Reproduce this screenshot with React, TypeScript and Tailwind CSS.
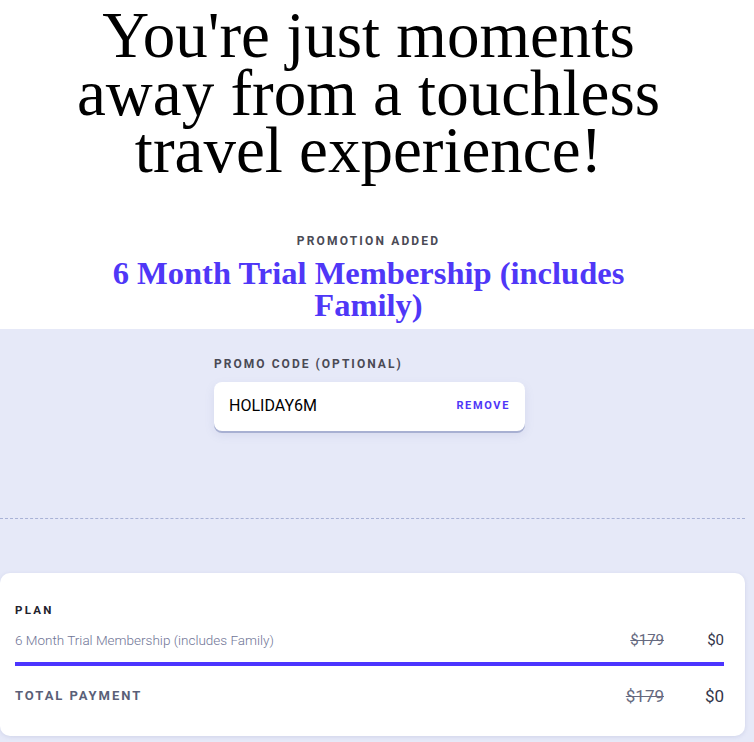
import React from "react";

export default function App() {
  const sans = { fontFamily: "Roboto, 'Liberation Sans', sans-serif" };
  const serif = { fontFamily: "'Liberation Serif', 'DejaVu Serif', serif" };
  return (
    <div className="w-[754px] h-[742px] overflow-hidden bg-white flex flex-col" style={sans}>
      <div className="flex flex-col items-center pt-[7px] pr-[17px]">
        <h1
          className="text-center text-[65px] leading-[57.5px] text-black w-[640px] font-normal"
          style={serif}
        >
          You're just moments away from a touchless travel experience!
        </h1>
        <div className="mt-[54px] text-[12px] font-bold tracking-[0.18em] text-[#4a4a55] leading-[14px]">
          PROMOTION ADDED
        </div>
        <div
          className="mt-[9px] text-center text-[32.5px] leading-[32px] font-bold text-[#4f37f7] w-[600px]"
          style={serif}
        >
          6 Month Trial Membership (includes Family)
        </div>
      </div>
      <div className="mt-[8px] flex-1 bg-[#e6e9f8] flex flex-col">
        <div className="pl-[214px] pt-[28px]">
          <div className="text-[12px] font-bold tracking-[0.17em] text-[#4a4a55] leading-[14px]">
            PROMO CODE (OPTIONAL)
          </div>
          <div className="mt-[11px] w-[311px] h-[49px] bg-white rounded-lg shadow-[0_2px_0_#a8b0d2,0_4px_10px_rgba(120,130,180,0.15)] flex items-center justify-between pl-[15px] pr-[15px]">
            <span className="text-[16px] text-black">HOLIDAY6M</span>
            <span className="text-[11px] font-bold tracking-[0.15em] text-[#4f37f7]">REMOVE</span>
          </div>
        </div>
        <div className="mt-[87px] w-[745px] border-t border-dashed border-[#a9b2d6]" />
        <div className="mt-[54px] w-[745px] h-[163px] bg-white rounded-[10px] shadow-[0_1px_4px_rgba(120,130,180,0.2)] px-[15px] pt-[30px]">
          <div className="text-[11.5px] font-bold tracking-[0.2em] text-[#22222c] leading-[14px]">PLAN</div>
          <div className="mt-[15px] flex items-center pr-[6px] leading-[16px]">
            <span className="flex-1 text-[13.5px] font-light text-[#6f7596]">
              6 Month Trial Membership (includes Family)
            </span>
            <span className="text-[15px] text-[#666a80] line-through">$179</span>
            <span className="w-[60px] text-right text-[15px] text-[#33354a]">$0</span>
          </div>
          <div className="mt-[14px] mr-[6px] h-[4px] bg-[#4c35ff]" />
          <div className="mt-[20px] flex items-center pr-[6px] leading-[20px]">
            <span className="flex-1 text-[13px] font-bold tracking-[0.15em] text-[#5a5f78]">
              TOTAL PAYMENT
            </span>
            <span className="text-[17px] text-[#666a80] line-through">$179</span>
            <span className="w-[60px] text-right text-[17px] text-[#33354a]">$0</span>
          </div>
        </div>
      </div>
    </div>
  );
}
